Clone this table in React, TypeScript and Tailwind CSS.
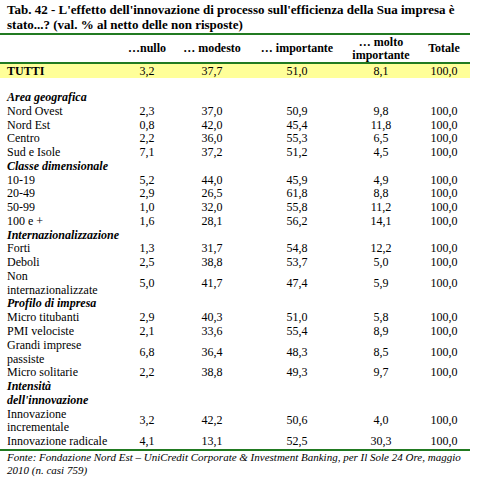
import React from "react";

type Row =
  | { kind: "section"; label: string[] }
  | { kind: "data"; label: string[]; values: string[] };

const rows: Row[] = [
  { kind: "section", label: ["Area geografica"] },
  { kind: "data", label: ["Nord Ovest"], values: ["2,3", "37,0", "50,9", "9,8", "100,0"] },
  { kind: "data", label: ["Nord Est"], values: ["0,8", "42,0", "45,4", "11,8", "100,0"] },
  { kind: "data", label: ["Centro"], values: ["2,2", "36,0", "55,3", "6,5", "100,0"] },
  { kind: "data", label: ["Sud e Isole"], values: ["7,1", "37,2", "51,2", "4,5", "100,0"] },
  { kind: "section", label: ["Classe dimensionale"] },
  { kind: "data", label: ["10-19"], values: ["5,2", "44,0", "45,9", "4,9", "100,0"] },
  { kind: "data", label: ["20-49"], values: ["2,9", "26,5", "61,8", "8,8", "100,0"] },
  { kind: "data", label: ["50-99"], values: ["1,0", "32,0", "55,8", "11,2", "100,0"] },
  { kind: "data", label: ["100 e +"], values: ["1,6", "28,1", "56,2", "14,1", "100,0"] },
  { kind: "section", label: ["Internazionalizzazione"] },
  { kind: "data", label: ["Forti"], values: ["1,3", "31,7", "54,8", "12,2", "100,0"] },
  { kind: "data", label: ["Deboli"], values: ["2,5", "38,8", "53,7", "5,0", "100,0"] },
  { kind: "data", label: ["Non", "internazionalizzate"], values: ["5,0", "41,7", "47,4", "5,9", "100,0"] },
  { kind: "section", label: ["Profilo di impresa"] },
  { kind: "data", label: ["Micro titubanti"], values: ["2,9", "40,3", "51,0", "5,8", "100,0"] },
  { kind: "data", label: ["PMI velociste"], values: ["2,1", "33,6", "55,4", "8,9", "100,0"] },
  { kind: "data", label: ["Grandi imprese", "passiste"], values: ["6,8", "36,4", "48,3", "8,5", "100,0"] },
  { kind: "data", label: ["Micro solitarie"], values: ["2,2", "38,8", "49,3", "9,7", "100,0"] },
  { kind: "section", label: ["Intensità", "dell'innovazione"] },
  { kind: "data", label: ["Innovazione", "incrementale"], values: ["3,2", "42,2", "50,6", "4,0", "100,0"] },
  { kind: "data", label: ["Innovazione radicale"], values: ["4,1", "13,1", "52,5", "30,3", "100,0"] },
];

const cols = "grid grid-cols-[120px_54px_76px_94px_74px_52px]";

function Lines({ lines }: { lines: string[] }) {
  return (
    <>
      {lines.map((l, i) => (
        <div key={i} className="whitespace-nowrap">
          {l}
        </div>
      ))}
    </>
  );
}

export default function App() {
  return (
    <div className="w-[479px] h-[480px] bg-white text-black font-[family-name:'Liberation_Serif',serif] overflow-hidden">
      <div className="w-[470px]">
        <div className="pt-[2px] pb-[1px] pl-[7px] text-[13px] leading-[15px] font-bold border-b-2 border-[#217a21]">
          <div className="whitespace-nowrap">
            Tab. 42 - L'effetto dell'innovazione di processo sull'efficienza della Sua impresa è
          </div>
          <div className="whitespace-nowrap">stato...? (val. % al netto delle non risposte)</div>
        </div>

        <div className={`${cols} h-[29px] items-center text-[12px] leading-[13px] font-bold border-b-2 border-[#217a21]`}>
          <div />
          <div className="text-center">…nullo</div>
          <div className="text-center">… modesto</div>
          <div className="text-center">… importante</div>
          <div className="text-center">
            <div>… molto</div>
            <div>importante</div>
          </div>
          <div className="text-center">Totale</div>
        </div>

        <div className={`${cols} h-[14px] items-center bg-[#ffff99] text-[12px] leading-[14px]`}>
          <div className="pl-[7px] font-bold">TUTTI</div>
          {["3,2", "37,7", "51,0", "8,1", "100,0"].map((v, i) => (
            <div key={i} className="text-center">
              {v}
            </div>
          ))}
        </div>

        <div className="h-[13px]" />

        <div className="text-[12px] leading-[13.77px] border-b-2 border-[#217a21]">
          {rows.map((r, i) =>
            r.kind === "section" ? (
              <div key={i} className="pl-[7px] font-bold italic">
                <Lines lines={r.label} />
              </div>
            ) : (
              <div key={i} className={`${cols} items-center`}>
                <div className="pl-[7px]">
                  <Lines lines={r.label} />
                </div>
                {r.values.map((v, j) => (
                  <div key={j} className="text-center">
                    {v}
                  </div>
                ))}
              </div>
            )
          )}
        </div>

        <div className="pl-[7px] text-[11px] leading-[13px] italic">
          <div className="whitespace-nowrap">
            Fonte: Fondazione Nord Est – UniCredit Corporate &amp; Investment Banking, per Il Sole 24 Ore, maggio
          </div>
          <div className="whitespace-nowrap">2010 (n. casi 759)</div>
        </div>
      </div>
    </div>
  );
}
